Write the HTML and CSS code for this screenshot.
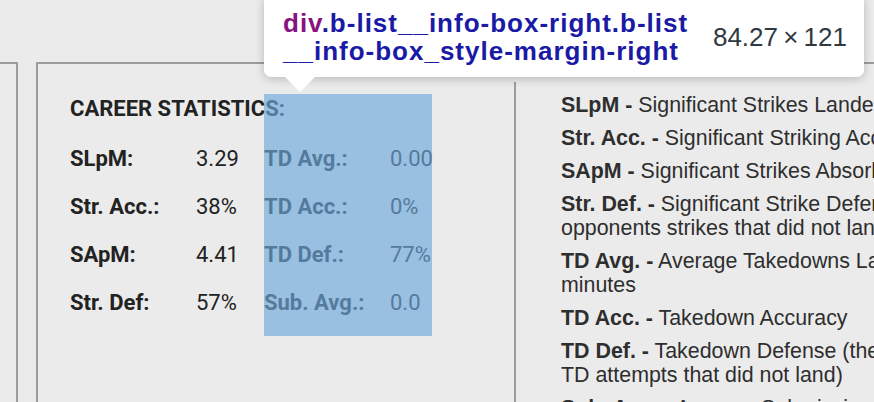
FILE: index.html
```html
<!DOCTYPE html>
<html>
<head>
<meta charset="utf-8">
<link rel="stylesheet" href="styles.css">
</head>
<body>
<div class="page">
  <div class="box-prev"></div>
  <div class="box-main">
    <div class="stats">
      <div class="col col-left">
        <h2 class="heading">Career statistics:</h2>
        <div class="row"><span class="label">SLpM:</span><span class="value">3.29</span></div>
        <div class="row"><span class="label">Str. Acc.:</span><span class="value">38%</span></div>
        <div class="row"><span class="label">SApM:</span><span class="value">4.41</span></div>
        <div class="row"><span class="label">Str. Def:</span><span class="value">57%</span></div>
      </div>
      <div class="col col-right">
        <div class="heading-spacer"></div>
        <div class="row"><span class="label">TD Avg.:</span><span class="value">0.00</span></div>
        <div class="row"><span class="label">TD Acc.:</span><span class="value">0%</span></div>
        <div class="row"><span class="label">TD Def.:</span><span class="value">77%</span></div>
        <div class="row"><span class="label">Sub. Avg.:</span><span class="value">0.0</span></div>
      </div>
    </div>
    <div class="desc">
      <p><b>SLpM -</b> Significant Strikes Landed per Minute</p>
      <p><b>Str. Acc. -</b> Significant Striking Accuracy</p>
      <p><b>SApM -</b> Significant Strikes Absorbed per Minute</p>
      <p><b>Str. Def. -</b> Significant Strike Defence (the % of<br>opponents strikes that did not land)</p>
      <p><b>TD Avg. -</b> Average Takedowns Landed per 15<br>minutes</p>
      <p><b>TD Acc. -</b> Takedown Accuracy</p>
      <p><b>TD Def. -</b> Takedown Defense (the % of opponents<br>TD attempts that did not land)</p>
      <p><b>Sub. Avg. -</b> Average Submissions Attempted per 15 minutes</p>
    </div>
  </div>
</div>
<div class="tooltip">
  <div class="tip-name"><span class="tag">div</span>.b-list__info-box-right.b-list<br>__info-box_style-margin-right</div>
  <div class="tip-size">84.27&thinsp;×&thinsp;121</div>
</div>
</body>
</html>
```
FILE: styles.css
```css
html, body {
  margin: 0;
  padding: 0;
}
body {
  background: #ebebeb;
  width: 874px;
  height: 402px;
  overflow: hidden;
  position: relative;
  font-family: Roboto, "Liberation Sans", sans-serif;
  color: #222;
}
.page {
  display: flex;
  padding-top: 62px;
  height: 402px;
  box-sizing: border-box;
}
.box-prev {
  flex: none;
  width: 16px;
  border-top: 2px solid #9c9ca0;
  border-right: 2px solid #9c9ca0;
}
.box-main {
  flex: 1;
  margin-left: 18px;
  border-top: 2px solid #9c9ca0;
  border-left: 2px solid #9c9ca0;
  padding: 18px 0 0 32px;
  display: flex;
  min-width: 0;
}
.stats {
  display: flex;
  margin-top: 12px;
  align-self: flex-start;
  flex: none;
}
.col {
  display: flex;
  flex-direction: column;
}
.col-left {
  width: 194px;
}
.col-right {
  width: 168px;
  position: relative;
}
.col-right::after {
  content: "";
  position: absolute;
  inset: 0;
  background: rgba(111, 168, 220, 0.66);
}
.heading {
  margin: 0 0 21px;
  font-size: 22px;
  font-weight: 700;
  line-height: 29px;
  text-transform: uppercase;
  white-space: nowrap;
}
.heading-spacer {
  height: 29px;
  margin-bottom: 21px;
}
.row {
  display: flex;
  font-size: 22px;
  line-height: 29px;
  margin-bottom: 19px;
  white-space: nowrap;
}
.label {
  width: 126px;
  flex: none;
  font-weight: 700;
}
.desc {
  margin-left: 82px;
  border-left: 2px solid #9c9ca0;
  padding: 11px 0 0 45px;
  font-family: "Liberation Sans", Arial, sans-serif;
  font-size: 21.4px;
  color: #2e2e2e;
  white-space: nowrap;
}
.desc p {
  margin: 0 0 9px;
  line-height: 24px;
}
.tooltip {
  position: absolute;
  left: 264px;
  top: -6px;
  width: 600px;
  height: 83px;
  box-sizing: border-box;
  padding: 15px 17px 0 19px;
  background: #fff;
  border-radius: 7px;
  box-shadow: 0 2px 10px rgba(0, 0, 0, 0.22);
  display: flex;
  justify-content: space-between;
  align-items: flex-start;
  font-family: "Liberation Sans", Arial, sans-serif;
}
.tooltip::after {
  content: "";
  position: absolute;
  left: 21px;
  top: 100%;
  border-left: 15px solid transparent;
  border-right: 15px solid transparent;
  border-top: 15px solid #fff;
}
.tip-name {
  font-size: 26px;
  font-weight: 700;
  line-height: 28px;
  letter-spacing: 1px;
  color: #1a1aa6;
}
.tag {
  color: #881280;
}
.tip-size {
  font-size: 26px;
  line-height: 28px;
  padding-top: 14px;
  color: #303942;
}
```
